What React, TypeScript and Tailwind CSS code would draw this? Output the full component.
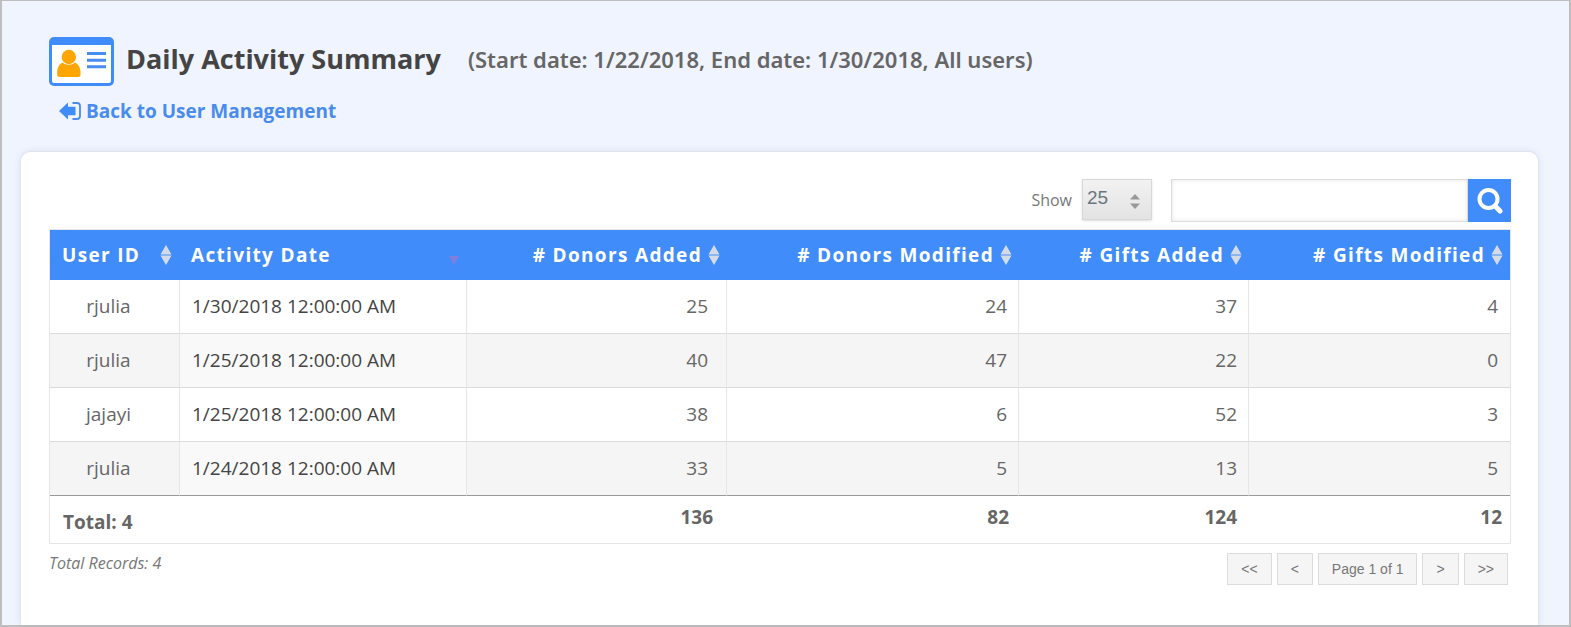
import React from 'react';

interface ActivityRow {
    user: string;
    date: string;
    donorsAdded: number;
    donorsModified: number;
    giftsAdded: number;
    giftsModified: number;
}

const rows: ActivityRow[] = [
    { user: 'rjulia', date: '1/30/2018 12:00:00 AM', donorsAdded: 25, donorsModified: 24, giftsAdded: 37, giftsModified: 4 },
    { user: 'rjulia', date: '1/25/2018 12:00:00 AM', donorsAdded: 40, donorsModified: 47, giftsAdded: 22, giftsModified: 0 },
    { user: 'jajayi', date: '1/25/2018 12:00:00 AM', donorsAdded: 38, donorsModified: 6, giftsAdded: 52, giftsModified: 3 },
    { user: 'rjulia', date: '1/24/2018 12:00:00 AM', donorsAdded: 33, donorsModified: 5, giftsAdded: 13, giftsModified: 5 },
];

const numericColumns = ['# Donors Added', '# Donors Modified', '# Gifts Added', '# Gifts Modified'];

const CardIcon = () => (
    <svg viewBox="0 0 65 49" className="w-[65px] h-[49px] shrink-0" aria-hidden="true">
        <rect width="65" height="49" rx="5" fill="#408cfb" />
        <path d="M3 8h59v36a2 2 0 0 1-2 2H5a2 2 0 0 1-2-2z" fill="#fff" />
        <circle cx="19.8" cy="20" r="7.2" fill="#ffa500" />
        <path d="M13.500 25.500c1.800 1.500 4 2.200 6.300 2.200s4.500-.7 6.300-2.200c3.400 1.500 5.400 5.500 5.400 10v2a2.500 2.500 0 0 1-2.500 2.500H10.700a2.500 2.500 0 0 1-2.500-2.500v-2c0-4.500 1.900-8.500 5.300-10z" fill="#ffa500" />
        <path d="M38 16.500h19M38 23.300h19M38 29.700h19" stroke="#4a8bee" strokeWidth="3" />
    </svg>
);

const BackIcon = () => (
    <svg viewBox="0 0 22 18" className="w-[22px] h-[18px] shrink-0" aria-hidden="true">
        <path d="M0 9 9 .500V4.800h7.500v8.400H9v4.300z" fill="#408cfb" />
        <path d="M13.500 1H18a3 3 0 0 1 3 3v10a3 3 0 0 1-3 3h-4.500" fill="none" stroke="#4a8bee" strokeWidth="1.800" />
    </svg>
);

const SearchIcon = () => (
    <svg viewBox="0 0 27 27" className="w-[27px] h-[27px]" aria-hidden="true">
        <circle cx="12.500" cy="12" r="9" fill="none" stroke="#fff" strokeWidth="4" />
        <path d="m19 19 5 5" stroke="#fff" strokeWidth="5" strokeLinecap="round" />
    </svg>
);

const SortIcon = () => (
    <svg viewBox="0 0 12 20" className="w-3 h-5 shrink-0" aria-hidden="true">
        <path d="M6 0l5.500 9.400H.500zM6 20l5.500-9.400H.500z" fill="#d5dbe6" />
    </svg>
);

const SortedIcon = () => (
    <svg viewBox="0 0 12 20" className="w-3 h-5 shrink-0" aria-hidden="true">
        <path d="M1 11h10l-5 9z" fill="#8080dc" />
    </svg>
);

const pageButton = 'h-8 border border-[#dcdcdc] bg-[#f5f5f5] px-[13px] font-["Liberation_Sans",Arial,sans-serif] text-sm text-[#777] cursor-pointer';
const cell = 'h-[54px] border-b border-r-[#e6e6e6] border-b-[#dcdcdc] group-last:border-b-[#999]';

const App: React.FC = () => {
    return (
        <div className="flex min-h-screen flex-col border-2 border-t border-[#bebebe] bg-[#f0f4ff] pl-[18px] pr-[30px] font-['Open_Sans','Noto_Sans',sans-serif] text-[#666]">
            <header className="pl-[29px] pt-9">
                <div className="flex items-start">
                    <CardIcon />
                    <h1 className="ml-3 text-[27px] leading-[44px] font-bold text-[#444]">Daily Activity Summary</h1>
                    <p className="ml-[27px] font-['Noto_Sans','Open_Sans',sans-serif] text-[22px] leading-[44px] font-semibold">(Start date: 1/22/2018, End date: 1/30/2018, All users)</p>
                </div>
                <a href="#users" className="ml-[10px] mt-[11px] inline-flex items-center gap-[5px] text-[19px] leading-7 font-bold text-[#4a8bee]">
                    <BackIcon />
                    Back to User Management
                </a>
            </header>

            <main className="mt-[25px] flex-1 rounded-t-[10px] border border-b-0 border-[#e0e4ec] bg-white pl-7 pr-[27px] pt-[27px] shadow-[0_0_6px_rgba(80,100,140,0.12)]">
                <div className="flex items-start justify-end">
                    <label htmlFor="page-size" className="mr-[10px] text-base leading-[42px] text-[#777]">Show</label>
                    <div className="relative">
                        <select
                            id="page-size"
                            defaultValue="25"
                            className="h-[41px] w-[70px] appearance-none border border-[#d8d8d8] bg-linear-to-b from-[#f2f2f2] to-[#e3e3e3] pb-[3px] pl-1 font-['Liberation_Sans',Arial,sans-serif] text-[19px] text-[#6b7780] shadow-sm"
                        >
                            <option>10</option>
                            <option>25</option>
                            <option>50</option>
                        </select>
                        <svg viewBox="0 0 10 15" className="pointer-events-none absolute right-3 top-[15px] h-[15px] w-[10px]" aria-hidden="true">
                            <path d="M5 0l5 5.500H0zM5 15l5-5.500H0z" fill="#999" />
                        </svg>
                    </div>
                    <input
                        type="text"
                        aria-label="Search records"
                        className="ml-[19px] h-[43px] w-[297px] border border-[#dcdcdc] px-2 text-base shadow-[inset_0_0_4px_rgba(0,0,0,0.1)]"
                    />
                    <button aria-label="Search" className="flex h-[43px] w-[43px] cursor-pointer items-center justify-center bg-[#408cfb]">
                        <SearchIcon />
                    </button>
                </div>

                <table className="mt-[7px] w-full table-fixed border-separate border-spacing-0 border border-[#e6e6e6] text-[19px]">
                    <colgroup>
                        <col className="w-[130px]" />
                        <col className="w-[287px]" />
                        <col className="w-[260px]" />
                        <col className="w-[292px]" />
                        <col className="w-[230px]" />
                        <col className="w-[261px]" />
                    </colgroup>
                    <thead>
                        <tr className="h-[50px] bg-[#408cfb] text-[19px] tracking-[0.07em] text-white">
                            <th className="pl-3 pr-2 font-bold">
                                <div className="flex items-center justify-between">User ID<SortIcon /></div>
                            </th>
                            <th className="pl-[11px] pr-[7px] font-bold">
                                <div className="flex items-center justify-between">Activity Date<SortedIcon /></div>
                            </th>
                            {numericColumns.map((name) => (
                                <th key={name} className="pr-[7px] font-bold">
                                    <div className="flex items-center justify-end gap-[6px]">{name}<SortIcon /></div>
                                </th>
                            ))}
                        </tr>
                    </thead>
                    <tbody>
                        {rows.map((row, i) => (
                            <tr key={i} className="group even:bg-[#f5f5f5]">
                                <td className={`${cell} border-r pr-3 text-center`}>{row.user}</td>
                                <td className={`${cell} border-r pl-3 text-[#444] group-even:bg-[#f9f9f9]`}>{row.date}</td>
                                <td className={`${cell} border-r pr-[18px] text-right`}>{row.donorsAdded}</td>
                                <td className={`${cell} border-r pr-[11px] text-right`}>{row.donorsModified}</td>
                                <td className={`${cell} border-r pr-[11px] text-right`}>{row.giftsAdded}</td>
                                <td className={`${cell} pr-3 text-right`}>{row.giftsModified}</td>
                            </tr>
                        ))}
                    </tbody>
                    <tfoot>
                        <tr className="h-[47px] font-bold">
                            <td colSpan={2} className="pl-[13px] pt-[6px]">Total: 4</td>
                            <td className="pr-[14px] pb-1 text-right">136</td>
                            <td className="pr-[10px] pb-1 text-right">82</td>
                            <td className="pr-3 pb-1 text-right">124</td>
                            <td className="pr-2 pb-1 text-right">12</td>
                        </tr>
                    </tfoot>
                </table>

                <div className="flex items-start justify-between pt-[9px] pr-[3px]">
                    <p className="text-base leading-5 italic text-[#777]">Total Records: 4</p>
                    <nav aria-label="Pagination" className="flex gap-[5px]">
                        <button className={pageButton}>&lt;&lt;</button>
                        <button className={pageButton}>&lt;</button>
                        <button className={pageButton}>Page 1 of 1</button>
                        <button className={pageButton}>&gt;</button>
                        <button className={pageButton}>&gt;&gt;</button>
                    </nav>
                </div>
            </main>
        </div>
    );
};

export default App;
